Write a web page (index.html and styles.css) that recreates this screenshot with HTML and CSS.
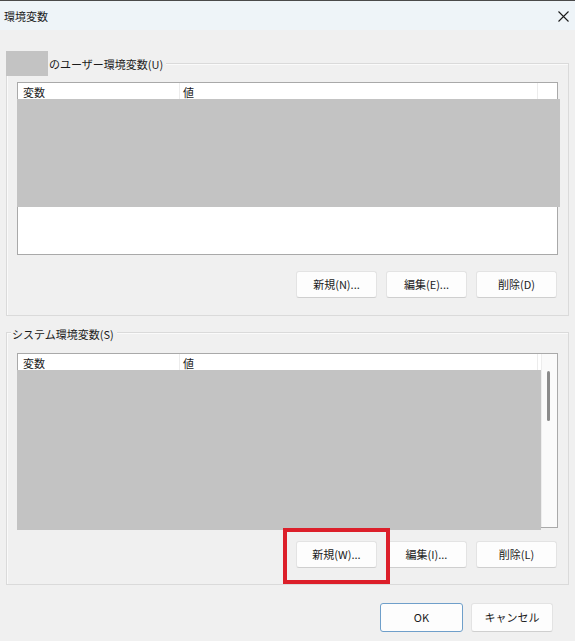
FILE: index.html
```html
<!DOCTYPE html>
<html lang="ja">
<head>
<meta charset="utf-8">
<title>環境変数</title>
<link rel="stylesheet" href="styles.css">
</head>
<body>
<div class="window">
  <div class="titlebar">
    <span class="title">環境変数</span>
    <svg class="close" width="11" height="11" viewBox="0 0 11 11"><path d="M0.5 0.5 L10.5 10.5 M10.5 0.5 L0.5 10.5" stroke="#1a1a1a" stroke-width="1.1" fill="none"/></svg>
  </div>
  <div class="content">
    <section class="group group-user">
      <div class="legend legend-user"><span class="redact-name"></span><span class="legend-text">のユーザー環境変数(U)</span></div>
      <div class="list list-user">
        <div class="main">
          <div class="header">
            <div class="col col-name">変数</div>
            <div class="col col-value">値</div>
            <div class="col col-fill"></div>
          </div>
          <div class="redact-rows rows-user"></div>
        </div>
      </div>
      <div class="buttons buttons-user">
        <button class="btn">新規(N)...</button>
        <button class="btn">編集(E)...</button>
        <button class="btn">削除(D)</button>
      </div>
    </section>
    <section class="group group-system">
      <div class="legend legend-system"><span class="legend-text legend-text-sys">システム環境変数(S)</span></div>
      <div class="list list-system">
        <div class="main">
          <div class="header">
            <div class="col col-name">変数</div>
            <div class="col col-value">値</div>
          </div>
          <div class="redact-rows rows-system"></div>
        </div>
        <div class="vscroll"><div class="thumb"></div></div>
      </div>
      <div class="buttons buttons-system">
        <button class="btn btn-marked">新規(W)...<span class="highlight"></span></button>
        <button class="btn">編集(I)...</button>
        <button class="btn">削除(L)</button>
      </div>
    </section>
  </div>
  <div class="footer">
    <button class="btn btn-ok">OK</button>
    <button class="btn btn-cancel">キャンセル</button>
  </div>
</div>
</body>
</html>
```
FILE: styles.css
```css
* { box-sizing: border-box; }
html, body {
  margin: 0;
  padding: 0;
  background: #f0f0f0;
}
body {
  font-family: "Noto Sans CJK JP", "Noto Sans", sans-serif;
  font-size: 11px;
  color: #1b1b1b;
}
.window {
  width: 575px;
  height: 641px;
  background: #f0f0f0;
  overflow: hidden;
}
.titlebar {
  height: 30px;
  background: #eef4f8;
  border-top: 1px solid #4a4a4a;
  display: flex;
  align-items: center;
  justify-content: space-between;
  padding: 0 6px 0 4px;
}
.title {
  font-size: 11px;
  line-height: 14px;
  margin-top: 1px;
}
.close {
  display: block;
  margin-top: 1px;
}
.content {
  padding: 0 6px;
}
.group {
  border: 1px solid #dadada;
  box-shadow: inset 1px 1px 0 #fafafa;
  display: flex;
  flex-direction: column;
}
.group-user {
  margin-top: 33px;
  padding-bottom: 17px;
}
.group-system {
  margin-top: 16px;
  padding-bottom: 16px;
}
.legend {
  display: flex;
  align-items: center;
  height: 25px;
}
.legend-user {
  margin-top: -13px;
  margin-left: -1px;
}
.legend-system {
  margin-top: -12px;
  margin-left: 4px;
}
.redact-name {
  width: 42px;
  height: 25px;
  background: #c3c3c3;
}
.legend-text {
  background: #f0f0f0;
  padding: 0 3px 0 1px;
  line-height: 16px;
}
.legend-text-sys {
  padding-left: 1px;
}
.list {
  margin: 0 10px;
  background: #ffffff;
  border: 1px solid #a9a9a9;
  display: flex;
}
.list-user {
  margin-top: 6px;
  height: 173px;
}
.list-system {
  margin-top: 7px;
  height: 175px;
}
.main {
  flex: 1;
  min-width: 0;
  display: flex;
  flex-direction: column;
}
.header {
  display: flex;
  height: 16px;
}
.col {
  height: 16px;
  padding-top: 2px;
  line-height: 14px;
  overflow: hidden;
  white-space: nowrap;
}
.col-name {
  width: 162px;
  padding-left: 5px;
  border-right: 1px solid #ececec;
}
.col-value {
  width: 358px;
  padding-left: 3px;
  border-right: 1px solid #ececec;
}
.col-fill {
  flex: 1;
}
.redact-rows {
  background: #c3c3c3;
  margin-left: -1px;
  flex-shrink: 0;
}
.rows-user {
  width: 543px;
  height: 108px;
}
.rows-system {
  width: 524px;
  height: 160px;
}
.vscroll {
  width: 16px;
  background: #fafafa;
  border-left: 1px solid #ededed;
  padding-top: 17px;
  padding-left: 5px;
}
.thumb {
  width: 3px;
  height: 50px;
  background: #8b8b8b;
  border-radius: 2px;
}
.buttons {
  display: flex;
  justify-content: flex-end;
  gap: 9px;
  margin-right: 11px;
}
.buttons-user {
  margin-top: 16px;
}
.buttons-system {
  margin-top: 13px;
}
.btn {
  font-family: inherit;
  font-size: 11px;
  color: #1b1b1b;
  width: 81px;
  height: 27px;
  padding: 0;
  background: #fdfdfd;
  border: 1px solid #e3e3e3;
  border-bottom-color: #cfcfcf;
  border-radius: 3px;
  line-height: 25px;
  text-align: center;
}
.btn-marked {
  position: relative;
}
.highlight {
  position: absolute;
  left: -14px;
  top: -14px;
  width: 107px;
  height: 56px;
  border: 4px solid #dc1f2a;
}
.footer {
  display: flex;
  justify-content: flex-end;
  gap: 8px;
  padding-right: 22px;
  margin-top: 18px;
}
.btn-ok {
  width: 83px;
  height: 29px;
  border: 1px solid #6f9fca;
  background: #fdfdfd;
  line-height: 27px;
}
.btn-cancel {
  width: 82px;
  height: 29px;
  line-height: 27px;
}
```
